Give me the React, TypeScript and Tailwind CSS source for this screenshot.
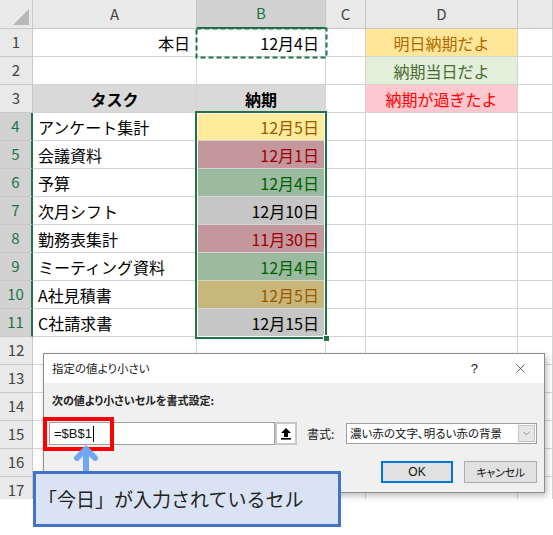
import { X, ChevronDown } from "lucide-react";

type RowData = {
  n: number;
  a?: string;
  aCls?: string;
  b?: string;
  bCls?: string;
  d?: string;
  dCls?: string;
  sel?: boolean;
};

const cell = "shrink-0 flex items-center border-r border-b border-[#d4d4d4] overflow-hidden whitespace-nowrap";
const head = "w-[33px] shrink-0 flex items-center justify-center bg-[#e9e9e9] border-r border-b border-[#c8c8c8] text-[15px] text-[#444]";
const selHead = "w-[33px] shrink-0 flex items-center justify-center bg-[#d2d2d2] border-b border-[#c8c8c8] border-r-2 border-r-[#217346] text-[15px] text-[#217346]";

const rows: RowData[] = [
  { n: 1, a: "本日", aCls: "justify-end pr-[6px]", b: "12月4日", d: "明日納期だよ", dCls: "justify-center bg-[#ffe699] text-[#b06a00]" },
  { n: 2, d: "納期当日だよ", dCls: "justify-center bg-[#e2efda] text-[#4a6b33]" },
  { n: 3, a: "タスク", aCls: "justify-center font-bold bg-[#d9d9d9]", b: "納期", bCls: "justify-center font-bold bg-[#d9d9d9]", d: "納期が過ぎたよ", dCls: "justify-center bg-[#ffc7ce] text-[#ff0000]" },
  { n: 4, sel: true, a: "アンケート集計", b: "12月5日", bCls: "justify-end pr-[6px] bg-[#ffeb9c] text-[#9c5700]" },
  { n: 5, sel: true, a: "会議資料", b: "12月1日", bCls: "justify-end pr-[6px] bg-[#c3979b] text-[#9c0006]" },
  { n: 6, sel: true, a: "予算", b: "12月4日", bCls: "justify-end pr-[6px] bg-[#9bba9f] text-[#006100]" },
  { n: 7, sel: true, a: "次月シフト", b: "12月10日", bCls: "justify-end pr-[6px] bg-[#c6c6c6] text-black" },
  { n: 8, sel: true, a: "勤務表集計", b: "11月30日", bCls: "justify-end pr-[6px] bg-[#c3979b] text-[#9c0006]" },
  { n: 9, sel: true, a: "ミーティング資料", b: "12月4日", bCls: "justify-end pr-[6px] bg-[#9bba9f] text-[#006100]" },
  { n: 10, sel: true, a: "A社見積書", b: "12月5日", bCls: "justify-end pr-[6px] bg-[#c8b77a] text-[#9c5700]" },
  { n: 11, sel: true, a: "C社請求書", b: "12月15日", bCls: "justify-end pr-[6px] bg-[#c6c6c6] text-black" },
  { n: 12 },
  { n: 13 },
  { n: 14 },
  { n: 15 },
  { n: 16 },
  { n: 17 },
];

function Row({ r }: { r: RowData }) {
  return (
    <div className="flex h-[28px]">
      <div className={r.sel ? selHead : head}>{r.n}</div>
      <div className={`${cell} w-[164px] ${r.aCls ?? "justify-start pl-[5px]"}`}>{r.a}</div>
      <div className={`${cell} w-[129px] ${r.bCls ?? "justify-end pr-[6px]"}`}>{r.b}</div>
      <div className={`${cell} w-[40px]`} />
      <div className={`${cell} w-[152px] ${r.dCls ?? ""}`}>{r.d}</div>
      <div className={`${cell} flex-1`} />
    </div>
  );
}

function ColHead({ w, label }: { w: string; label?: string }) {
  return (
    <div className={`${w} shrink-0 flex items-center justify-center bg-[#e9e9e9] border-r border-b border-[#c8c8c8] text-[15px] text-[#444]`}>
      {label}
    </div>
  );
}

export default function App() {
  return (
    <div className="relative w-[553px] h-[535px] overflow-hidden bg-white font-['Noto_Sans_CJK_JP','Noto_Sans',sans-serif] text-[16px] text-black">
      <div className="h-[499px] overflow-hidden">
        <div className="flex h-[29px]">
          <div className="relative w-[33px] shrink-0 bg-[#e9e9e9] border-r border-b border-[#c8c8c8]">
            <svg className="absolute left-0 top-0" width="33" height="29" viewBox="0 0 33 29">
              <polygon points="13,25 29,25 29,9" fill="#b8b8b8" />
            </svg>
          </div>
          <ColHead w="w-[164px]" label="A" />
          <div className="w-[129px] shrink-0 flex items-center justify-center bg-[#d2d2d2] border-r border-[#c8c8c8] border-b-2 border-b-[#217346] text-[15px] text-[#217346]">
            B
          </div>
          <ColHead w="w-[40px]" label="C" />
          <ColHead w="w-[152px]" label="D" />
          <ColHead w="flex-1" />
        </div>
        {rows.map((r) => (
          <Row key={r.n} r={r} />
        ))}
      </div>

      {/* copy marquee on B1 */}
      <svg className="absolute left-[195px] top-[27px]" width="133" height="32" viewBox="0 0 133 32">
        <rect x="1.5" y="1.5" width="130" height="29" fill="none" stroke="#217346" strokeWidth="2" strokeDasharray="5 3" />
      </svg>

      {/* selection B4:B11 */}
      <div className="absolute left-[195px] top-[111px] w-[132px] h-[228px] border-2 border-[#217346] shadow-[inset_0_0_0_1px_white]">
        <div className="absolute right-[-5px] bottom-[-5px] w-[7px] h-[7px] bg-[#217346] border border-white" />
      </div>

      {/* dialog */}
      <div className="absolute left-[43px] top-[353px] w-[502px] h-[140px] border border-[#8c8c8c] bg-[#f0f0f0] shadow-[2px_3px_6px_rgba(0,0,0,0.25)] flex flex-col [font-feature-settings:'palt']">
        <div className="h-[29px] bg-white flex items-center pl-[8px] pr-[16px] text-[11.5px] text-[#222]">
          <span>指定の値より小さい</span>
          <span className="ml-auto mr-[35px] text-[13px] font-['Liberation_Sans',sans-serif]">?</span>
          <X size={15} strokeWidth={1.1} color="#222" />
        </div>
        <div className="flex flex-col pl-[5px] pr-[7px]">
          <div className="mt-[8px] h-[18px] flex items-center pl-[3px] text-[11px] font-bold text-[#222]">
            次の値より小さいセルを書式設定:
          </div>
          <div className="mt-[13px] flex items-center h-[23px]">
            <div className="w-[226px] h-[23px] bg-white border border-[#a0a0a0] flex items-center pl-[4px] text-[13px] font-['Liberation_Sans',sans-serif] text-[#111]">
              <span>=$B$1</span>
              <span className="ml-[1px] w-[1px] h-[16px] bg-black" />
            </div>
            <div className="w-[22px] h-[23px] bg-[#c8c8c8] p-[2px]">
              <div className="w-full h-full bg-white flex items-center justify-center">
                <svg width="12" height="13" viewBox="0 0 12 13">
                  <polygon points="6,1 11,6 8,6 8,10 4,10 4,6 1,6" fill="#000" />
                  <rect x="1" y="11" width="10" height="1.6" fill="#000" />
                </svg>
              </div>
            </div>
            <span className="ml-[10px] text-[12px] text-[#222]">書式:</span>
            <div className="ml-auto w-[191px] h-[21px] bg-white border border-[#a0a0a0] flex items-center pl-[3px] text-[11.5px] text-[#111]">
              <span>濃い赤の文字、明るい赤の背景</span>
              <div className="ml-auto mr-[1px] w-[17px] h-[17px] bg-[#e6e6e6] border border-[#c4c4c4] flex items-center justify-center">
                <ChevronDown size={11} strokeWidth={1.2} color="#555" />
              </div>
            </div>
          </div>
          <div className="mt-[16px] flex justify-end gap-[11px]">
            <div className="w-[72px] h-[22px] border-2 border-[#0078d7] bg-[#e1e1e1] flex items-center justify-center text-[12px] text-[#111] font-['Liberation_Sans',sans-serif]">
              OK
            </div>
            <div className="w-[73px] h-[22px] border border-[#adadad] bg-[#e1e1e1] flex items-center justify-center text-[11px] tracking-[-0.3px] text-[#111]">
              キャンセル
            </div>
          </div>
        </div>
      </div>

      {/* red highlight */}
      <div className="absolute left-[43px] top-[417px] w-[71px] h-[34px] border-4 border-[#ff0000]" />

      {/* arrow */}
      <svg className="absolute left-[72px] top-[443px]" width="30" height="32" viewBox="0 0 30 32">
        <polyline points="5,15 14,6 23,15" fill="none" stroke="#72a7f2" strokeWidth="6" strokeLinecap="round" strokeLinejoin="round" />
        <line x1="14" y1="7" x2="14" y2="32" stroke="#72a7f2" strokeWidth="6" />
      </svg>

      {/* callout */}
      <div className="absolute left-[33px] top-[471px] w-[308px] h-[56px] border-[3px] border-[#4472c4] bg-[#dae3f3] flex items-center pl-[2px] text-[19px] text-[#222]">
        「今日」が入力されているセル
      </div>
    </div>
  );
}
